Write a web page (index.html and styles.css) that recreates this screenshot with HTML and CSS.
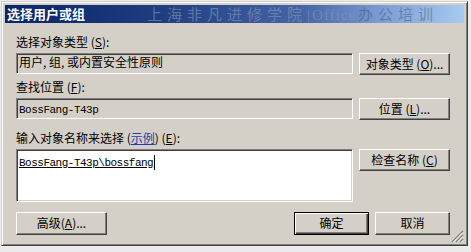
FILE: index.html
```html
<!DOCTYPE html>
<html>
<head>
<meta charset="utf-8">
<link rel="stylesheet" href="styles.css">
</head>
<body>
<div class="window">
  <div class="titlebar">
    <span class="title">选择用户或组</span>
    <span class="watermark"><span class="wm-cjk">上海非凡进修学院</span><span class="wm-bar">|</span><span class="wm-latin">Office</span><span class="wm-cjk wm-end">办公培训</span></span>
  </div>
  <div class="client">
    <div class="label">选择对象类型 (<u>S</u>):</div>
    <div class="row row-gap-s">
      <div class="field ro">用户, 组, 或内置安全性原则</div>
      <div class="btn">对象类型 (<u>O</u>)...</div>
    </div>
    <div class="label gap-m">查找位置 (<u>F</u>):</div>
    <div class="row row-gap-s">
      <div class="field ro mono-field"><span class="mono">BossFang-T43p</span></div>
      <div class="btn">位置 (<u>L</u>)...</div>
    </div>
    <div class="label gap-l">输入对象名称来选择 (<span class="link">示例</span>) (<u>E</u>):</div>
    <div class="row row-gap-s">
      <div class="field textarea"><span class="mono entered">BossFang-T43p\bossfang</span><span class="caret"></span></div>
      <div class="btn">检查名称 (<u>C</u>)</div>
    </div>
    <div class="actions">
      <div class="btn wide">高级(<u>A</u>)...</div>
      <div class="btn-group">
        <div class="btn small default">确定</div>
        <div class="btn small">取消</div>
      </div>
    </div>
  </div>
  <svg class="grip" width="13" height="13" viewBox="0 0 13 13">
    <path d="M12 1 L1 12 M12 5 L5 12 M12 9 L9 12" stroke="#808080" stroke-width="1.4" fill="none"/>
    <path d="M12 2.5 L2.5 12 M12 6.5 L6.5 12 M12 10.5 L10.5 12" stroke="#ffffff" stroke-width="0.9" fill="none"/>
  </svg>
</div>
</body>
</html>
```

FILE: styles.css
```css
* { box-sizing: border-box; }
html, body { margin: 0; padding: 0; }
body {
  width: 471px;
  height: 252px;
  overflow: hidden;
  background: #ececec;
  font-family: "Noto Sans CJK SC", sans-serif;
  font-size: 12px;
  line-height: 14px;
  color: #000;
}
.window {
  position: relative;
  margin: 1px 0 0 1px;
  width: 467px;
  height: 245px;
  background: #d4d0c8;
  border-top: 1px solid #d4d0c8;
  border-left: 1px solid #d4d0c8;
  border-right: 1px solid #404040;
  border-bottom: 1px solid #404040;
  box-shadow: inset 1px 1px #ffffff, inset -1px -1px #808080;
  padding: 3px;
  display: flex;
  flex-direction: column;
}
.titlebar {
  height: 18px;
  flex: none;
  background: linear-gradient(to right, #0a246a 0%, #1e3c80 33%, #4466a8 65%, #7f9fd5 83%, #a6caf0 100%);
  display: flex;
  align-items: center;
  padding-left: 2px;
  white-space: nowrap;
}
.title {
  flex: none;
  color: #fff;
  font-weight: bold;
  font-size: 13px;
  line-height: 18px;
}
.watermark {
  flex: none;
  margin-left: 62px;
  font-size: 15px;
  line-height: 18px;
  color: rgba(140, 150, 175, 0.62);
}
.wm-cjk { letter-spacing: 5px; }
.wm-end { color: rgba(70, 85, 120, 0.5); }
.wm-bar { font-family: "Liberation Serif", serif; margin-right: 2px; }
.wm-latin { font-family: "Liberation Serif", serif; letter-spacing: 1px; margin-right: 2px; }

.client {
  position: relative;
  flex: 1;
  padding: 12px 13px 0 11px;
}
.label { height: 14px; white-space: nowrap; }
.gap-m { margin-top: 5px; }
.gap-l { margin-top: 11px; }
.link { color: #1f3fa8; text-decoration: underline; }

.row {
  display: grid;
  grid-template-columns: 337px 91px;
  column-gap: 6px;
  align-items: start;
}
.row-gap-s { margin-top: 4px; }

.field {
  height: 21px;
  border-style: solid;
  border-width: 1px;
  border-color: #808080 #ffffff #ffffff #808080;
  box-shadow: inset 1px 1px #404040, inset -1px -1px #d4d0c8;
  padding: 1px 2px 0 2px;
  white-space: nowrap;
  overflow: hidden;
}
.ro { background: #d4d0c8; }
.mono-field { padding-top: 2px; }
.textarea {
  background: #fff;
  height: 53px;
  padding-top: 4px;
}
.mono {
  font-family: "Liberation Mono", monospace;
  font-size: 11px;
  letter-spacing: -0.5px;
}
.entered { text-decoration: underline; }
.caret {
  display: inline-block;
  width: 1px;
  height: 15px;
  background: #000;
  vertical-align: -4px;
  margin-left: 1px;
}

.btn {
  height: 22px;
  background: #d4d0c8;
  border-style: solid;
  border-width: 1px;
  border-color: #ffffff #404040 #404040 #ffffff;
  box-shadow: inset -1px -1px #808080;
  display: flex;
  align-items: center;
  justify-content: center;
  white-space: nowrap;
  padding-bottom: 1px;
}
.actions {
  margin-top: 10px;
  display: flex;
  justify-content: space-between;
  width: 434px;
}
.actions .btn { height: 23px; }
.wide { width: 91px; }
.btn-group { display: flex; gap: 6px; }
.small { width: 75px; }
.default {
  border: 1px solid #000;
  box-shadow: inset 1px 1px #ffffff, inset -1px -1px #404040, inset -2px -2px #808080;
}
.grip {
  position: absolute;
  right: 3px;
  bottom: 2px;
}
```
